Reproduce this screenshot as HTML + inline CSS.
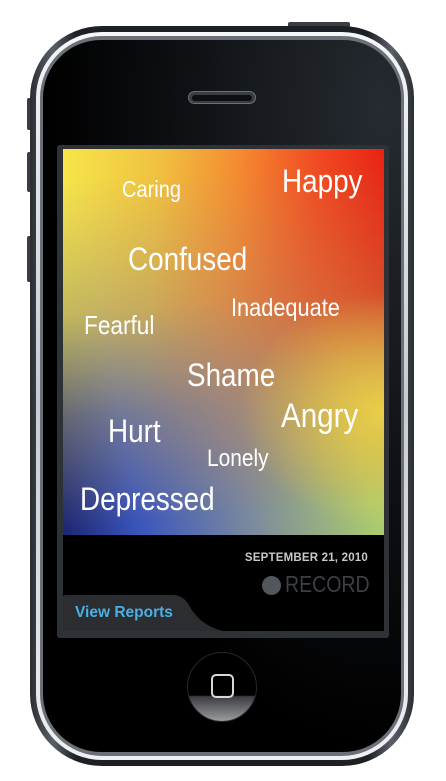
<!DOCTYPE html>
<html><head><style>
*{margin:0;padding:0;box-sizing:border-box}
body{width:446px;height:781px;background:#fff;position:relative;overflow:hidden;font-family:"Liberation Sans",sans-serif}
.abs{position:absolute}
.body{left:30px;top:26px;width:384px;height:740px;border-radius:72px;background:linear-gradient(90deg,#2a2e33,#5a6068 6%,#1c2024 12%,#1c2024 88%,#5a6068 94%,#2a2e33);}
.ring{left:36px;top:32px;width:372px;height:728px;border-radius:66px;background:linear-gradient(180deg,#f4f6f8,#c8ccd0 50%,#eef0f2);}
.ring2{left:40px;top:36px;width:364px;height:720px;border-radius:62px;background:#6a7078}
.face{left:43px;top:40px;width:358px;height:712px;border-radius:58px;background:radial-gradient(ellipse at 95% 10%,#262b31 0%,#0c0e11 45%,#000 70%)}
.speaker{left:188px;top:91px;width:68px;height:13px;border-radius:7px;background:#3a3e44;border:1px solid #6a7078}
.speaker:after{content:"";position:absolute;left:3px;top:3px;right:3px;bottom:2px;border-radius:5px;background:#0c0e10}
.frame{left:57px;top:145px;width:332px;height:493px;background:#2e3236;border-radius:3px}
.grad{left:63px;top:149px;width:321px;height:386px;overflow:hidden}
.l1{left:0;top:0;width:100%;height:100%;background:linear-gradient(80deg,#1d2670 0%,#3b56bc 20%,#7d8c9c 50%,#a9c870 80%,#b4dc64 100%)}
.l2{left:0;top:0;width:100%;height:100%;background:linear-gradient(95deg,#f6e64a 0%,#f0c040 28%,#f58a30 50%,#f04a22 72%,#e40e0e 100%);-webkit-mask-image:linear-gradient(175deg,#000 8%,rgba(0,0,0,.75) 40%,rgba(0,0,0,.3) 65%,transparent 92%);mask-image:linear-gradient(175deg,#000 8%,rgba(0,0,0,.75) 40%,rgba(0,0,0,.3) 65%,transparent 92%)}
.l3{left:0;top:0;width:100%;height:100%;background:radial-gradient(ellipse 45% 30% at 100% 68%,rgba(240,210,70,.9),rgba(240,200,70,0))}
.w{position:absolute;color:#fff;line-height:1;white-space:nowrap;transform:scaleX(.87);transform-origin:0 0}
.bar{left:63px;top:535px;width:321px;height:96px;background:#000}
.date{right:16px;top:17px;color:#c8c8c8;font-weight:bold;font-size:11.5px;letter-spacing:.2px}
.rec{right:14px;top:38px;color:#3c3f45;font-size:23px;line-height:1;transform:scaleX(.85);transform-origin:100% 0}
.dot{left:199px;top:41px;width:19px;height:19px;border-radius:50%;background:#53575d}
.tab{left:0;top:60px;width:160px;height:36px}
.vr{left:12px;top:69px;color:#4ab0e4;font-weight:bold;font-size:15.5px}
.home{left:187px;top:652px;width:70px;height:70px;border-radius:50%;background:linear-gradient(180deg,#000 0%,#000 62%,#3a3c40 64%,#9a9ca0 100%);border:1px solid #25272a}
.sq{left:23px;top:21px;width:23px;height:24px;border:2px solid #d8d8d8;border-radius:5px}
</style></head><body>
<div class="abs" style="left:288px;top:22px;width:62px;height:6px;background:#3a3e44;border-radius:2px"></div>
<div class="abs" style="left:27px;top:98px;width:5px;height:32px;background:#3a3e44;border-radius:2px"></div>
<div class="abs" style="left:27px;top:152px;width:5px;height:40px;background:#3a3e44;border-radius:2px"></div>
<div class="abs" style="left:27px;top:236px;width:5px;height:46px;background:#3a3e44;border-radius:2px"></div>
<div class="abs body"></div>
<div class="abs ring"></div>
<div class="abs ring2"></div>
<div class="abs face"></div>
<div class="abs speaker"></div>
<div class="abs frame"></div>
<div class="abs grad">
 <div class="abs l1"></div><div class="abs l2"></div><div class="abs l3"></div>
 <div class="w" style="left:219px;top:16px;font-size:32px">Happy</div>
 <div class="w" style="left:59px;top:29px;font-size:23px">Caring</div>
 <div class="w" style="left:65px;top:94px;font-size:32px">Confused</div>
 <div class="w" style="left:168px;top:147px;font-size:25px">Inadequate</div>
 <div class="w" style="left:21px;top:163px;font-size:26px">Fearful</div>
 <div class="w" style="left:124px;top:210px;font-size:32px">Shame</div>
 <div class="w" style="left:218px;top:250px;font-size:34px">Angry</div>
 <div class="w" style="left:45px;top:266px;font-size:32px">Hurt</div>
 <div class="w" style="left:144px;top:298px;font-size:24px">Lonely</div>
 <div class="w" style="left:17px;top:334px;font-size:32px">Depressed</div>
</div>
<div class="abs bar">
 <div class="abs date">SEPTEMBER 21, 2010</div>
 <div class="abs dot"></div>
 <div class="abs rec">RECORD</div>
 <svg class="abs tab" viewBox="0 0 160 36"><path d="M0 2 Q0 0 2 0 L110 0 Q120 0 126 10 Q136 30 160 36 L0 36Z" fill="#2b2d31"/></svg>
 <div class="abs vr">View Reports</div>
</div>
<div class="abs home"><div class="abs sq"></div></div>
</body></html>
